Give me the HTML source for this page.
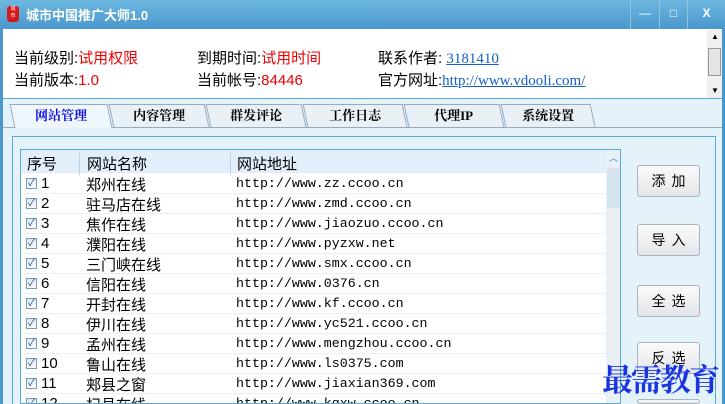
<!DOCTYPE html>
<html style="width:725px;height:404px;overflow:hidden"><head><meta charset="utf-8">
<style>
*{margin:0;padding:0;box-sizing:border-box}
body{width:725px;height:404px;overflow:hidden;position:relative;background:#fff;font-family:"Liberation Sans","Noto Sans CJK SC",sans-serif;}
.title{position:absolute;left:0;top:0;width:725px;height:29px;background:linear-gradient(#6db8e0,#4a97cc);}
.title .t{position:absolute;left:26px;top:5px;color:#fff;font-size:13px;font-weight:bold;}
.logo{position:absolute;left:7px;top:6px;width:12px;height:16px;background:#d41a1a;border-radius:3px;color:#fff;font-size:5px;line-height:7px;text-align:center}
.wb{position:absolute;top:0;height:29px;border-left:1px solid #8cc4e4;color:#fff;text-align:center;font-size:12px;line-height:26px}
.frame{position:absolute;left:0;top:29px;width:3px;height:375px;background:#4a97cc}
.frameR{position:absolute;right:0;top:29px;width:3px;height:375px;background:#4a97cc}
.info{position:absolute;font-size:15px;color:#000;white-space:nowrap}
.red{color:#e00}
.lnk{color:#1560c8;text-decoration:underline;font-family:"Liberation Serif",serif}
.vs{position:absolute;left:707px;top:30px;width:15px;height:68px;background:#f0f0f0}
.tabs{position:absolute;left:3px;top:98px;width:719px;height:306px;background:#e4f2fa;border-top:1px solid #5aaad8}
.tab{position:absolute;top:104px;height:23px;background:#e9f1f7;border:1px solid #9ab;border-bottom:none;font-size:13px;font-weight:bold;text-align:center;line-height:22px;font-family:"Liberation Serif","Noto Serif CJK SC",serif;transform:skewX(12deg)}
.tab span{display:inline-block;transform:skewX(-12deg)}
.tabline{position:absolute;left:3px;top:127px;width:719px;height:1px;background:#9ab}
.panel{position:absolute;left:12px;top:136px;width:704px;height:268px;border:1px solid #5aaad8;border-bottom:none;background:#e4f2fa}
.list{position:absolute;left:20px;top:149px;width:601px;height:255px;border:1px solid #5aaad8;background:#fff;overflow:hidden}
.hdr{position:absolute;left:0;top:0;width:585px;height:23px;background:#e2effa;font-size:15px}
.hdr div{position:absolute;top:3px}
.sep{position:absolute;top:1px;width:1px;height:22px;background:#b8d2e6}
.row{position:absolute;left:0;width:585px;height:20px;border-bottom:1px solid #eceeef;font-size:15px}
.row .cb{position:absolute;left:5px;top:4px;width:11px;height:11px;border:1px solid #7a9ab8;background:linear-gradient(#dde8f2,#fff);font-size:10px;line-height:9px;color:#2a4a8a;text-align:center}
.row .n{position:absolute;left:20px;top:1px}
.row .nm{position:absolute;left:65px;top:0px}
.row .u{position:absolute;left:215px;top:2px;font-family:"Liberation Mono",monospace;font-size:13.3px}
.sb{position:absolute;left:585px;top:0;width:15px;height:255px;background:#e8f0f6}
.sb .th{position:absolute;left:1px;top:18px;width:13px;height:40px;background:#d6e4ef}
.btn{position:absolute;left:637px;width:63px;height:32px;border:1px solid #a8b4be;border-radius:3px;background:linear-gradient(#fafafa,#e2e6ea);font-size:14px;text-align:center;line-height:30px;letter-spacing:6px;padding-left:6px;overflow:hidden}
.wm{position:absolute;left:602px;top:355px;color:#1a35e0;font-size:31px;font-weight:bold;font-family:"Noto Serif CJK SC",serif;letter-spacing:-2px;white-space:nowrap}
</style></head><body>
<div class="title"><div class="logo">城<br>市</div><div class="t">城市中国推广大师1.0</div>
<div class="wb" style="left:630px;width:29px">&#8212;</div>
<div class="wb" style="left:659px;width:28px">&#9633;</div>
<div class="wb" style="left:687px;width:38px;font-weight:bold">X</div></div>
<div class="frame"></div><div class="frameR"></div>
<div class="info" style="left:14px;top:47px">当前级别:<span class="red">试用权限</span></div>
<div class="info" style="left:14px;top:69px">当前版本:<span class="red">1.0</span></div>
<div class="info" style="left:197px;top:47px">到期时间:<span class="red">试用时间</span></div>
<div class="info" style="left:197px;top:69px">当前帐号:<span class="red">84446</span></div>
<div class="info" style="left:378px;top:47px">联系作者: <span class="lnk">3181410</span></div>
<div class="info" style="left:378px;top:69px">官方网址:<span class="lnk">http://www.vdooli.com/</span></div>
<div class="vs"><div style="position:absolute;left:1px;top:18px;width:13px;height:28px;border:1px solid #999;background:#e4e4e4"></div><div style="position:absolute;left:4px;top:2px;font-size:8px">▲</div><div style="position:absolute;left:4px;top:56px;font-size:8px">▼</div></div>
<div class="tabs"></div>
<div class="tabline"></div>
<div class="tab" style="left:12px;width:98px;background:#f0f7fc;color:#1010e0;height:24px"><span>网站管理</span></div>
<div class="tab" style="left:111px;width:96px"><span>内容管理</span></div>
<div class="tab" style="left:208px;width:96px"><span>群发评论</span></div>
<div class="tab" style="left:305px;width:100px"><span>工作日志</span></div>
<div class="tab" style="left:406px;width:96px"><span>代理IP</span></div>
<div class="tab" style="left:503px;width:90px"><span>系统设置</span></div>
<div class="panel"></div>
<div class="list">
<div class="hdr"><div style="left:6px">序号</div><div class="sep" style="left:58px"></div><div style="left:66px">网站名称</div><div class="sep" style="left:209px"></div><div style="left:216px">网站地址</div></div>
<div class="row" style="top:24px"><div class="cb">✓</div><div class="n">1</div><div class="nm">郑州在线</div><div class="u">http://www.zz.ccoo.cn</div></div>
<div class="row" style="top:44px"><div class="cb">✓</div><div class="n">2</div><div class="nm">驻马店在线</div><div class="u">http://www.zmd.ccoo.cn</div></div>
<div class="row" style="top:64px"><div class="cb">✓</div><div class="n">3</div><div class="nm">焦作在线</div><div class="u">http://www.jiaozuo.ccoo.cn</div></div>
<div class="row" style="top:84px"><div class="cb">✓</div><div class="n">4</div><div class="nm">濮阳在线</div><div class="u">http://www.pyzxw.net</div></div>
<div class="row" style="top:104px"><div class="cb">✓</div><div class="n">5</div><div class="nm">三门峡在线</div><div class="u">http://www.smx.ccoo.cn</div></div>
<div class="row" style="top:124px"><div class="cb">✓</div><div class="n">6</div><div class="nm">信阳在线</div><div class="u">http://www.0376.cn</div></div>
<div class="row" style="top:144px"><div class="cb">✓</div><div class="n">7</div><div class="nm">开封在线</div><div class="u">http://www.kf.ccoo.cn</div></div>
<div class="row" style="top:164px"><div class="cb">✓</div><div class="n">8</div><div class="nm">伊川在线</div><div class="u">http://www.yc521.ccoo.cn</div></div>
<div class="row" style="top:184px"><div class="cb">✓</div><div class="n">9</div><div class="nm">孟州在线</div><div class="u">http://www.mengzhou.ccoo.cn</div></div>
<div class="row" style="top:204px"><div class="cb">✓</div><div class="n">10</div><div class="nm">鲁山在线</div><div class="u">http://www.ls0375.com</div></div>
<div class="row" style="top:224px"><div class="cb">✓</div><div class="n">11</div><div class="nm">郏县之窗</div><div class="u">http://www.jiaxian369.com</div></div>
<div class="row" style="top:244px"><div class="cb">✓</div><div class="n">12</div><div class="nm">杞县在线</div><div class="u">http://www.kqxw.ccoo.cn</div></div>
<div class="sb"><div class="th"></div><div style="position:absolute;left:3px;top:1px;font-size:9px;color:#3a8ad0">︿</div></div>
</div>
<div class="btn" style="top:165px">添加</div>
<div class="btn" style="top:224px">导入</div>
<div class="btn" style="top:285px">全选</div>
<div class="btn" style="top:342px">反选</div>
<div class="btn" style="top:399px;height:5px"></div>
<div class="wm">最需教育</div>
</body></html>
